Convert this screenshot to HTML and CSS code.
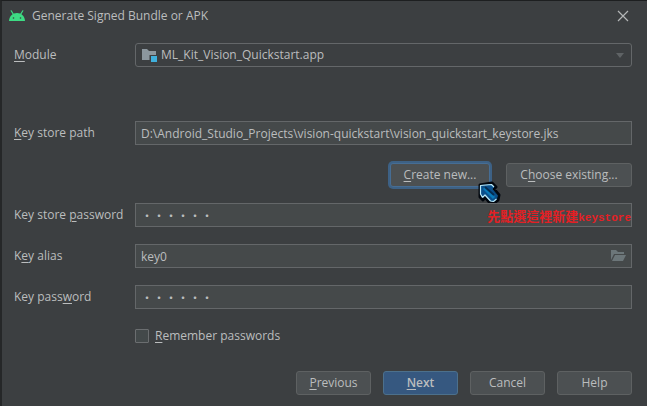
FILE: index.html
```html
<!DOCTYPE html>
<html lang="en">
<head>
<meta charset="utf-8">
<title>Generate Signed Bundle or APK</title>
<link rel="stylesheet" href="styles.css">
</head>
<body>
<main class="dialog">
  <header class="titlebar">
    <svg class="logo" width="18" height="12" viewBox="0 0 18 12" aria-hidden="true">
      <path d="M1 11C1.300 6 4.500 3 9 3S16.700 6 17 11Z" fill="#3ddc84"/>
      <path d="M3.200 .8L5.600 4.800M14.800 .8L12.400 4.800" stroke="#3ddc84" stroke-width="1.200" stroke-linecap="round"/>
      <circle cx="5.500" cy="8" r=".8" fill="#3c3f41"/><circle cx="12.500" cy="8" r=".8" fill="#3c3f41"/>
    </svg>
    <h1 class="title">Generate Signed Bundle or APK</h1>
    <button class="close" type="button" aria-label="Close">
      <svg width="12" height="12" viewBox="0 0 12 12"><path d="M1 1L11 11M11 1L1 11" stroke="#b4b6b7" stroke-width="1.200"/></svg>
    </button>
  </header>
  <form class="form">
    <div class="row row-module">
      <label for="module"><u>M</u>odule</label>
      <div class="field">
        <svg class="module-icon" width="16" height="16" viewBox="0 0 16 16" aria-hidden="true">
          <path d="M1 2H6L8 4H15V8H8.500V13H1Z" fill="#8c979e"/><path d="M10 9H16V15H10Z" fill="#40b0dc"/>
        </svg>
        <select class="input select" id="module"><option>ML_Kit_Vision_Quickstart.app</option></select>
        <svg class="arrow" width="10" height="6" viewBox="0 0 10 6" aria-hidden="true"><path d="M1 0H9L5 5Z" fill="#5f6365"/></svg>
      </div>
    </div>
    <div class="row">
      <label for="path"><u>K</u>ey store path</label>
      <input class="input" id="path" type="text" value="D:\Android_Studio_Projects\vision-quickstart\vision_quickstart_keystore.jks">
    </div>
    <div class="store-actions">
      <button class="button wide focused" type="button"><span><u>C</u>reate new...</span>
        <svg class="cursor" width="24" height="24" viewBox="0 0 24 24" aria-hidden="true">
          <path d="M2 3L14 1L18 5L16 7L21 13L20 18L16 21L12 21L7 15L5 18L2 15Z" fill="#02070e" stroke="#02070e" stroke-width="3" stroke-linejoin="round"/>
          <path d="M2.500 3.500L13.500 2.500L16 5L14 7L19.500 13.500L18.500 17L15.500 19.500L12.500 19L7 13L4.500 15.500L2.500 12Z" fill="#0a4f8b" stroke="#0b4a7c" stroke-width="1" stroke-linejoin="round"/>
          <path d="M4.500 15.500L2.500 12V3.500L13.500 2.500L16 5M4.500 15.500L7 13L12.500 19L15.500 19.500L18.500 17" fill="none" stroke="#bbe9f8" stroke-width="1.200" stroke-linejoin="round"/>
          <path d="M6 6L16 16" stroke="#0879b8" stroke-width="3"/><path d="M7 5L16 13" stroke="#052b50" stroke-width="2"/>
        </svg>
      </button>
      <button class="button wide" type="button"><span>C<u>h</u>oose existing...</span></button>
    </div>
    <div class="row">
      <label for="store-password">Key store <u>p</u>assword</label>
      <div class="field">
        <input class="input password" id="store-password" type="password" value="secret">
        <span class="note">先點選這裡新建<span class="note-latin">keystore</span></span>
      </div>
    </div>
    <div class="row">
      <label for="alias">K<u>e</u>y alias</label>
      <div class="field">
        <input class="input" id="alias" type="text" value="key0">
        <button class="browse" type="button" aria-label="Choose key alias">
          <svg width="16" height="12" viewBox="0 0 16 12"><path d="M0 0H5L7 2H13V4H3L0 10Z" fill="#6c7679"/><path d="M4 5H15L12 11H1Z" fill="#6c7679"/></svg>
        </button>
      </div>
    </div>
    <div class="row">
      <label for="key-password">Key pass<u>w</u>ord</label>
      <input class="input password" id="key-password" type="password" value="secret">
    </div>
    <div class="remember">
      <input class="checkbox" id="remember" type="checkbox">
      <label for="remember"><u>R</u>emember passwords</label>
    </div>
    <footer class="footer">
      <button class="button" type="button"><span><u>P</u>revious</span></button>
      <button class="button primary" type="button"><span><u>N</u>ext</span></button>
      <button class="button" type="button">Cancel</button>
      <button class="button" type="button">Help</button>
    </footer>
  </form>
</main>
</body>
</html>
```
FILE: styles.css
```css
* { box-sizing: border-box; }
body {
  margin: 0;
  background: #3c3f41;
  color: #bbbdbe;
  font: 12px/20px "Open Sans", "Noto Sans", sans-serif;
}
input, select, button { font: inherit; color: inherit; }
u { text-decoration: underline; text-underline-offset: 2px; }
.dialog {
  min-height: 100vh;
  border-top: 1px solid #1d1f20;
  border-left: 2px solid #252728;
}
.titlebar {
  display: flex;
  align-items: center;
  height: 30px;
  padding: 0 18px 0 6px;
}
.logo { margin-right: 6px; }
.title { flex: 1; margin: 0; font-size: 12px; font-weight: 400; }
.close, .browse {
  display: flex;
  padding: 0;
  border: 0;
  background: none;
}
.form { padding: 12px 15px 10px 12px; }
.row {
  display: grid;
  grid-template-columns: 121px 1fr;
  align-items: center;
  margin-bottom: 17px;
}
.row-module { margin-bottom: 54px; }
.field { position: relative; display: grid; }
.input {
  width: 100%;
  height: 24px;
  margin: 0;
  padding: 0 5px;
  border: 1px solid #646769;
  border-radius: 0;
  background: #45494a;
  outline: 0;
}
.select {
  appearance: none;
  padding-left: 25px;
  border-radius: 3px;
  background: #3c3f41;
}
.module-icon { position: absolute; left: 6px; top: 4px; }
.arrow { position: absolute; right: 7px; top: 10px; pointer-events: none; }
.browse { position: absolute; right: 5px; top: 6px; }
.password { font-family: "Noto Sans CJK TC", sans-serif; font-size: 12px; }
.note {
  position: absolute;
  right: 1px;
  top: 3px;
  color: #e41f24;
  font: 700 13px/20px "Noto Sans CJK TC", sans-serif;
  white-space: nowrap;
}
.note-latin { font-family: "Liberation Mono", monospace; font-size: 11px; }
.store-actions {
  display: flex;
  justify-content: flex-end;
  gap: 16px;
  margin-top: 18px;
  margin-bottom: 16px;
}
.button {
  position: relative;
  width: 75px;
  height: 24px;
  padding: 0;
  border: 1px solid #5e6162;
  border-radius: 3px;
  background: #4c5052;
  line-height: 20px;
}
.wide { width: 126px; }
.focused { width: 100px; border-color: #466d94; box-shadow: 0 0 0 2px #3d6185; }
.cursor { position: absolute; right: -13px; top: 18px; overflow: visible; }
.primary { border-color: #4c708c; background: #365880; font-weight: 600; }
.remember {
  display: flex;
  align-items: center;
  gap: 6px;
  margin-left: 121px;
}
.checkbox {
  appearance: none;
  width: 14px;
  height: 14px;
  margin: 0;
  border: 1px solid #6b6e70;
  border-radius: 1px;
  background: #43494a;
}
.footer {
  display: flex;
  justify-content: flex-end;
  gap: 12px;
  margin-top: 25px;
}
```
